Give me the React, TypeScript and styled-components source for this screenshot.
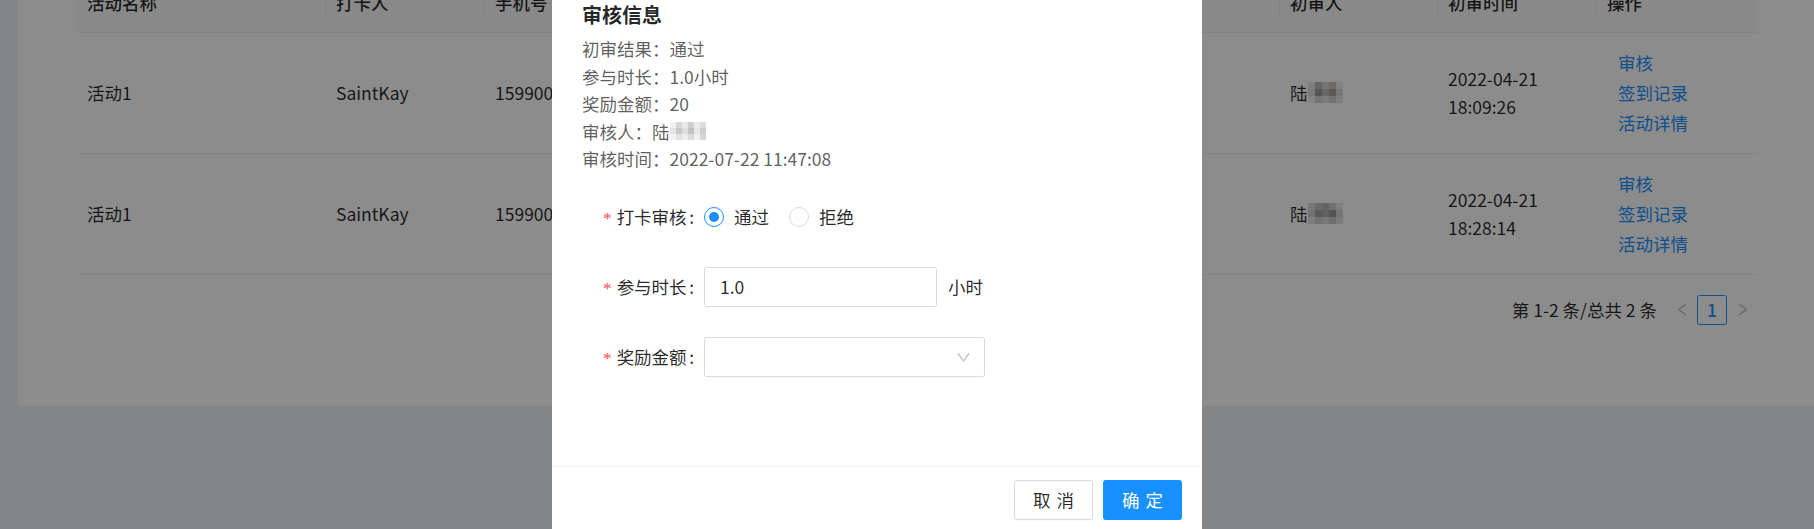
import React from 'react';
import styled, { createGlobalStyle } from 'styled-components';

const GlobalStyle = createGlobalStyle`
  html, body { margin: 0; padding: 0; }
  * { box-sizing: border-box; }
  body {
    width: 1814px;
    height: 529px;
    overflow: hidden;
    background: #f0f2f5;
    font-family: "Noto Sans CJK SC", "Noto Sans", sans-serif;
    font-size: 17.5px;
    line-height: 27.5px;
    color: rgba(0, 0, 0, 0.85);
  }
`;

const COLS = '249px 159px 265px 265px 265px 158px 159px 160px';

const Page = styled.div`
  padding-left: 17px;
  margin-top: -56px;
`;

const Card = styled.div`
  background: #fff;
  padding: 30px 0 81px 60px;
`;

const Table = styled.div`
  width: 1680px;
`;

const HeadRow = styled.div`
  display: grid;
  grid-template-columns: ${COLS};
  background: #fafafa;
  border-bottom: 1px solid #f0f0f0;
`;

const HeadCell = styled.div<{ $sep: boolean }>`
  position: relative;
  padding: 15px 10px;
  font-weight: 500;
  white-space: nowrap;
  min-height: 57.5px;
  &::before {
    content: '';
    display: ${(p) => (p.$sep ? 'block' : 'none')};
    position: absolute;
    right: 0;
    top: 50%;
    transform: translateY(-50%);
    width: 1px;
    height: 1.6em;
    background: rgba(0, 0, 0, 0.06);
  }
`;

const BodyRow = styled.div`
  display: grid;
  grid-template-columns: ${COLS};
  align-items: center;
  border-bottom: 1px solid #f0f0f0;
`;

const Cell = styled.div`
  padding: 15px 10px;
  white-space: nowrap;
`;

const LinkList = styled.div`
  display: flex;
  flex-direction: column;
  padding-left: 11px;
`;

const Link = styled.a`
  color: #1890ff;
  line-height: 30px;
  text-decoration: none;
`;

const Name = styled.span`
  display: inline-flex;
  align-items: center;
`;

const MosaicGrid = styled.span<{ $cols: number; $cell: number }>`
  display: inline-grid;
  grid-template-columns: repeat(${(p) => p.$cols}, ${(p) => p.$cell}px);
  grid-auto-rows: ${(p) => p.$cell}px;
`;

const MosaicCell = styled.span<{ $c: string }>`
  background: ${(p) => p.$c};
`;

const Pagination = styled.div`
  display: flex;
  justify-content: flex-end;
  align-items: center;
  width: 1680px;
  margin-top: 20px;
  height: 30px;
`;

const TotalText = styled.span`
  margin-right: 10px;
  line-height: 30px;
`;

const PageArrow = styled.span`
  width: 30px;
  height: 30px;
  display: flex;
  align-items: center;
  justify-content: center;
  color: rgba(0, 0, 0, 0.25);
`;

const PageItem = styled.span`
  width: 30px;
  height: 30px;
  display: flex;
  align-items: center;
  justify-content: center;
  border: 1px solid #1890ff;
  border-radius: 2.5px;
  color: #1890ff;
  font-weight: 500;
`;

const Overlay = styled.div`
  position: fixed;
  inset: 0;
  background: rgba(0, 0, 0, 0.45);
  z-index: 10;
`;

const Modal = styled.div`
  position: fixed;
  top: -30px;
  left: 552px;
  width: 650px;
  background: #fff;
  z-index: 11;
`;

const ModalBody = styled.div`
  padding: 30px 30px 89px;
`;

const Title = styled.h3`
  margin: 0;
  font-size: 20px;
  line-height: 30px;
  font-weight: 700;
  color: rgba(0, 0, 0, 0.85);
`;

const InfoList = styled.div`
  margin-top: 5px;
  color: rgba(0, 0, 0, 0.65);
`;

const InfoLine = styled.div`
  display: flex;
  align-items: center;
  line-height: 27.5px;
  height: 27.5px;
`;

const Form = styled.div`
  margin-top: 24.5px;
  display: flex;
  flex-direction: column;
  gap: 30px;
`;

const FormRow = styled.div`
  display: flex;
  align-items: center;
  height: 40px;
`;

const Label = styled.label`
  width: 122px;
  flex-shrink: 0;
  text-align: right;
  white-space: nowrap;
  color: rgba(0, 0, 0, 0.85);
  &::after {
    content: ':';
    margin: 0 10px 0 2.5px;
  }
`;

const Required = styled.span`
  display: inline-block;
  margin-right: 5px;
  color: #ff4d4f;
  font-family: "Liberation Serif", serif;
  font-size: 17.5px;
  line-height: 1;
`;

const RadioGroup = styled.div`
  display: flex;
  align-items: center;
`;

const RadioWrap = styled.label`
  display: inline-flex;
  align-items: center;
  margin-right: 10px;
`;

const RadioCircle = styled.span<{ $checked: boolean }>`
  position: relative;
  width: 20px;
  height: 20px;
  border-radius: 50%;
  border: 1px solid ${(p) => (p.$checked ? '#1890ff' : '#d9d9d9')};
  background: #fff;
  &::after {
    content: '';
    display: ${(p) => (p.$checked ? 'block' : 'none')};
    position: absolute;
    left: 50%;
    top: 50%;
    width: 10px;
    height: 10px;
    margin: -5px 0 0 -5px;
    border-radius: 50%;
    background: #1890ff;
  }
`;

const RadioText = styled.span`
  padding: 0 10px;
  color: rgba(0, 0, 0, 0.85);
`;

const Input = styled.div`
  width: 233px;
  height: 40px;
  border: 1px solid #d9d9d9;
  border-radius: 2.5px;
  padding: 0 15px;
  display: flex;
  align-items: center;
  color: rgba(0, 0, 0, 0.85);
`;

const Suffix = styled.span`
  margin-left: 11px;
  color: rgba(0, 0, 0, 0.85);
`;

const Select = styled.div`
  width: 281px;
  height: 40px;
  border: 1px solid #d9d9d9;
  border-radius: 2.5px;
  padding: 0 13px;
  display: flex;
  align-items: center;
  justify-content: flex-end;
  color: rgba(0, 0, 0, 0.25);
`;

const Footer = styled.div`
  border-top: 1px solid #f0f0f0;
  padding: 12.5px 20px;
  display: flex;
  justify-content: flex-end;
  gap: 10px;
`;

const Button = styled.button<{ $primary?: boolean }>`
  display: inline-flex;
  align-items: center;
  justify-content: center;
  white-space: nowrap;
  width: 79px;
  height: 40px;
  padding: 0;
  border-radius: 2.5px;
  border: 1px solid ${(p) => (p.$primary ? '#1890ff' : '#d9d9d9')};
  background: ${(p) => (p.$primary ? '#1890ff' : '#fff')};
  color: ${(p) => (p.$primary ? '#fff' : 'rgba(0, 0, 0, 0.85)')};
  font-family: inherit;
  font-size: 17.5px;
  line-height: 27.5px;
  box-shadow: 0 2px 0 rgba(0, 0, 0, 0.015);
  span {
    letter-spacing: 0.34em;
    margin-right: -0.34em;
  }
`;

const DownIcon = () => (
  <svg width="15" height="15" viewBox="64 64 896 896" fill="currentColor">
    <path d="M884 256h-75c-5.1 0-9.9 2.5-12.9 6.6L512 654.2 227.9 262.6c-3-4.1-7.8-6.6-12.9-6.6h-75c-6.5 0-10.3 7.4-6.5 12.7l352.6 486.1c12.8 17.6 39 17.6 51.7 0l352.6-486.1c3.9-5.3.1-12.7-6.4-12.7z" />
  </svg>
);

const LeftIcon = () => (
  <svg width="15" height="15" viewBox="64 64 896 896" fill="currentColor">
    <path d="M724 218.3V141c0-6.7-7.7-10.4-12.9-6.3L260.3 486.8a31.86 31.86 0 000 50.3l450.8 352.1c5.3 4.1 12.9.4 12.9-6.3v-77.3c0-4.9-2.3-9.6-6.1-12.6l-360-281 360-281.1c3.8-3 6.1-7.7 6.1-12.6z" />
  </svg>
);

const RightIcon = () => (
  <svg width="15" height="15" viewBox="64 64 896 896" fill="currentColor">
    <path d="M765.7 486.8L314.9 134.7A7.97 7.97 0 00302 141v77.3c0 4.9 2.3 9.6 6.1 12.6l360 281.1-360 281.1c-3.9 3-6.1 7.7-6.1 12.6V883c0 6.7 7.7 10.4 12.9 6.3l450.8-352.1a31.96 31.96 0 000-50.4z" />
  </svg>
);

const Mosaic = ({ colors, cols, cell }: { colors: string[]; cols: number; cell: number }) => (
  <MosaicGrid $cols={cols} $cell={cell}>
    {colors.map((c, i) => (
      <MosaicCell key={i} $c={c} />
    ))}
  </MosaicGrid>
);

const tableMosaic1 = [
  '#e6e6e6', '#b9b9b9', '#d6d6d6', '#c9c2bb', '#ececec',
  '#dcdcdc', '#9a9a9a', '#c4bdb6', '#a8a29c', '#d8d8d8',
  '#f0f0f0', '#d4d4d4', '#e2e2e2', '#cfcfcf', '#e8e8e8',
];
const tableMosaic2 = [
  '#d9d9d9', '#c2c2c2', '#bcb6b0', '#cdcdcd', '#e8e8e8',
  '#cfcfcf', '#a5a5a5', '#b3ada7', '#9e9893', '#d3d3d3',
  '#e6e6e6', '#d0d0d0', '#dadada', '#c8c8c8', '#e2e2e2',
];
const modalMosaic = [
  '#f0f0f0', '#d6d6d6', '#e8e8e8', '#cfcfcf', '#ececec', '#dcdcdc',
  '#e4e4e4', '#c8c8c8', '#dedede', '#c2c2c2', '#e6e6e6', '#cdcdcd',
  '#f2f2f2', '#e2e2e2', '#eeeeee', '#dadada', '#f1f1f1', '#d4d4d4',
];

const headers = ['活动名称', '打卡人', '手机号', '', '', '初审人', '初审时间', '操作'];

const rows = [
  { name: '活动1', user: 'SaintKay', phone: '15990012345', date: '2022-04-21', time: '18:09:26', mosaic: tableMosaic1 },
  { name: '活动1', user: 'SaintKay', phone: '15990012345', date: '2022-04-21', time: '18:28:14', mosaic: tableMosaic2 },
];

export default function App() {
  return (
    <>
      <GlobalStyle />
      <Page>
        <Card>
          <Table>
            <HeadRow>
              {headers.map((h, i) => (
                <HeadCell key={i} $sep={i < headers.length - 1}>
                  {h}
                </HeadCell>
              ))}
            </HeadRow>
            {rows.map((r, i) => (
              <BodyRow key={i}>
                <Cell>{r.name}</Cell>
                <Cell>{r.user}</Cell>
                <Cell>{r.phone}</Cell>
                <Cell />
                <Cell />
                <Cell>
                  <Name>
                    陆<Mosaic colors={r.mosaic} cols={5} cell={7} />
                  </Name>
                </Cell>
                <Cell>
                  <div>{r.date}</div>
                  <div>{r.time}</div>
                </Cell>
                <Cell>
                  <LinkList>
                    <Link>审核</Link>
                    <Link>签到记录</Link>
                    <Link>活动详情</Link>
                  </LinkList>
                </Cell>
              </BodyRow>
            ))}
          </Table>
          <Pagination>
            <TotalText>第 1-2 条/总共 2 条</TotalText>
            <PageArrow>
              <LeftIcon />
            </PageArrow>
            <PageItem>1</PageItem>
            <PageArrow>
              <RightIcon />
            </PageArrow>
          </Pagination>
        </Card>
      </Page>
      <Overlay />
      <Modal>
        <ModalBody>
          <Title>审核信息</Title>
          <InfoList>
            <InfoLine>初审结果：通过</InfoLine>
            <InfoLine>参与时长：1.0小时</InfoLine>
            <InfoLine>奖励金额：20</InfoLine>
            <InfoLine>
              审核人：陆<Mosaic colors={modalMosaic} cols={6} cell={6} />
            </InfoLine>
            <InfoLine>审核时间：2022-07-22 11:47:08</InfoLine>
          </InfoList>
          <Form>
            <FormRow>
              <Label>
                <Required>*</Required>打卡审核
              </Label>
              <RadioGroup>
                <RadioWrap>
                  <RadioCircle $checked />
                  <RadioText>通过</RadioText>
                </RadioWrap>
                <RadioWrap>
                  <RadioCircle $checked={false} />
                  <RadioText>拒绝</RadioText>
                </RadioWrap>
              </RadioGroup>
            </FormRow>
            <FormRow>
              <Label>
                <Required>*</Required>参与时长
              </Label>
              <Input>1.0</Input>
              <Suffix>小时</Suffix>
            </FormRow>
            <FormRow>
              <Label>
                <Required>*</Required>奖励金额
              </Label>
              <Select>
                <DownIcon />
              </Select>
            </FormRow>
          </Form>
        </ModalBody>
        <Footer>
          <Button>
            <span>取消</span>
          </Button>
          <Button $primary>
            <span>确定</span>
          </Button>
        </Footer>
      </Modal>
    </>
  );
}
